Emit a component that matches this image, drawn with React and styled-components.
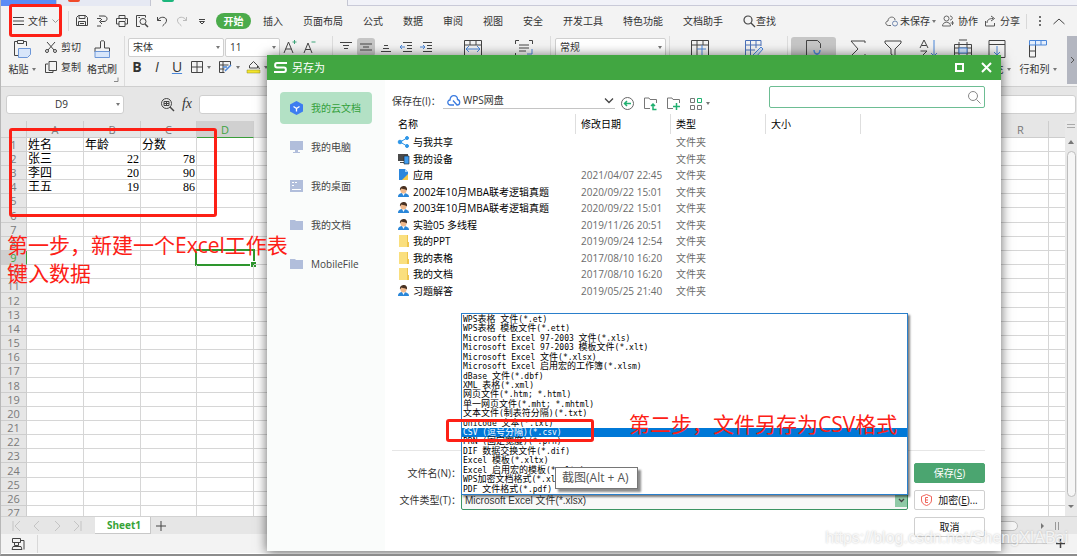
import React from 'react'
import styled, { createGlobalStyle, css } from 'styled-components'

const GlobalStyle = createGlobalStyle`
  * { box-sizing: border-box; }
  body {
    margin: 0;
    font-family: "Open Sans", "Noto Sans CJK SC", sans-serif;
    font-size: 10px;
    line-height: 14px;
    color: #333;
  }
  button, input, select {
    font: inherit;
    color: inherit;
    margin: 0;
    padding: 0;
    border: none;
    background: none;
    outline: none;
  }
  select { appearance: none; }
`;

const Page = styled.div`
  position: relative;
  display: flex;
  flex-direction: column;
  height: 100vh;
  overflow: hidden;
  background: #f3f3f3;
  border-left: 1px solid #b8b8b8;
  border-bottom: 2px solid #8c8c8c;
`;

const Svg = styled.svg`
  display: block;
  flex: none;
  overflow: visible;
  fill: none;
  stroke: ${p => p.$color || '#444'};
  stroke-width: ${p => p.$stroke || 1};
`;

const Icon = ({ w = 12, h = 12, color, stroke, children }) => (
  <Svg width={w} height={h} viewBox={`0 0 ${w} ${h}`} $color={color} $stroke={stroke} aria-hidden="true">
    {children}
  </Svg>
)

const Caret = styled.span`
  flex: none;
  border: 2px solid transparent;
  border-top: 3px solid #777;
  border-bottom: none;
`;

const Divider = styled.span`
  flex: none;
  width: 1px;
  height: ${p => p.$h || 16}px;
  background: #d8d8d8;
`;

/* window tabs */
const TabStrip = styled.div`
  display: flex;
  flex: none;
  height: 6px;
  background: #f1f2f8;
`;
const StripTab = styled.div`
  width: ${p => p.$w}px;
  padding-left: 11px;
  background: ${p => p.$bg};
  border-right: 1px solid #c4c6d2;
`;
const StripMark = styled.div`
  width: 12px;
  height: 2px;
  border-radius: 0 0 4px 4px;
  background: ${p => p.$bg};
`;
const StripRest = styled.div`
  flex: 1;
  border-bottom: 1px solid #c9cad8;
`;

/* menu bar */
const MenuBar = styled.div`
  display: flex;
  align-items: center;
  flex: none;
  height: 30px;
  padding: 0 12px 0 11px;
`;
const MenuButton = styled.button`
  display: flex;
  align-items: center;
  gap: ${p => p.$gap || 4}px;
  white-space: nowrap;
`;
const FileButton = styled(MenuButton)`
  width: 56px;
`;
const QuickTools = styled.div`
  display: flex;
  align-items: center;
  gap: 8px;
  padding: 0 8px 0 7px;
`;
const Tabs = styled.nav`
  display: flex;
  align-items: center;
  gap: 20px;
  flex: 1;
`;
const StartTab = styled.button`
  width: 35px;
  height: 16px;
  margin-right: -8px;
  border-radius: 8px;
  background: #4bab4b;
  color: #fff;
  font-weight: 700;
`;
const MenuRight = styled.div`
  display: flex;
  align-items: center;
  gap: 6px;
`;

/* ribbon */
const Ribbon = styled.div`
  display: flex;
  flex: none;
  height: 51px;
  border-bottom: 1px solid #cfcfcf;
`;
const Group = styled.div`
  display: flex;
  flex-direction: column;
  flex: none;
  width: ${p => p.$w}px;
  padding: 1px 0 0 ${p => p.$pl || 0}px;
  border-right: ${p => p.$line ? '1px solid #dcdcdc' : 'none'};
`;
const GroupRow = styled.div`
  display: flex;
  align-items: center;
  height: ${p => p.$h || 20}px;
  gap: ${p => p.$gap || 0}px;
`;
const BigTool = styled.button`
  display: flex;
  flex-direction: column;
  align-items: center;
  align-self: flex-start;
  flex: none;
  gap: 4px;
  width: ${p => p.$w || 36}px;
  height: 48px;
  padding-top: 3px;
  border-radius: 3px 3px 0 0;
  background: ${p => p.$on ? '#c6c6c6' : 'none'};
`;
const ToolLabel = styled.span`
  display: flex;
  align-items: center;
  gap: 3px;
  white-space: nowrap;
`;
const ToolButton = styled.button`
  display: flex;
  align-items: center;
  justify-content: center;
  flex: none;
  gap: 4px;
  min-width: ${p => p.$menu ? 26 : 18}px;
  height: 18px;
  white-space: nowrap;
  border-radius: 3px;
  background: ${p => p.$on ? '#c6c6c6' : 'none'};
`;
const Letter = styled.span`
  font-size: 14px;
  font-family: "Open Sans", sans-serif;
  font-weight: ${p => p.$bold ? 700 : 400};
  font-style: ${p => p.$italic ? 'italic' : 'normal'};
  text-decoration: ${p => p.$under ? 'underline #4a86d8' : 'none'};
`;
const PickerBox = styled.span`
  display: flex;
  align-items: center;
  width: ${p => p.$w}px;
  height: 19px;
  padding-right: 3px;
  background: #fff;
  border: 1px solid #cfcfcf;
  border-radius: 2px;

  select {
    flex: 1;
    min-width: 0;
    height: 17px;
    padding-left: 4px;
  }
`;
const RibbonMore = styled.button`
  flex: none;
  width: 10px;
  height: 48px;
  margin-left: auto;
  background: #b3b6c0;
`;

const Picker = ({ w, label, value }) => (
  <PickerBox $w={w}>
    <select aria-label={label}><option>{value}</option></select>
    <Caret />
  </PickerBox>
)

/* formula bar */
const FormulaBar = styled.div`
  display: flex;
  align-items: center;
  flex: none;
  height: 34px;
  padding: 0 1px 0 5px;
  background: #e6e6e6;
`;
const Field = styled.div`
  display: flex;
  align-items: center;
  width: ${p => p.$w ? p.$w + 'px' : 'auto'};
  flex: ${p => p.$w ? 'none' : 1};
  height: 19px;
  padding-right: 3px;
  background: #fff;
  border: 1px solid #cfcfcf;
  border-radius: 3px;

  input {
    flex: 1;
    min-width: 0;
    text-align: center;
  }
`;
const FormulaTools = styled.div`
  display: flex;
  align-items: center;
  justify-content: flex-end;
  gap: 8px;
  width: 75px;
  padding-right: 7px;
`;
const Fx = styled.span`
  font: italic 14px "Liberation Serif", serif;
`;

/* grid */
const SheetArea = styled.div`
  display: flex;
  flex: 1;
  min-height: 0;
  overflow: hidden;
`;
const GridClip = styled.div`
  flex: 1;
  min-width: 0;
  overflow: hidden;
  background: #fff;
`;
const Grid = styled.table`
  table-layout: fixed;
  width: 1105px;
  border-collapse: separate;
  border-spacing: 0;

  col { width: 57px; }
  col:nth-child(5n + 4) { width: 56px; }
  col:first-child { width: 26px; }

  thead th { height: 17px; }
  tbody tr { height: 14px; }
  tbody tr:nth-child(6n) { height: 15px; }
`;
const HeadCell = styled.th`
  padding: 0;
  border-right: 1px solid ${p => p.$on && p.$side ? '#3a9e3a' : '#cdcdcd'};
  border-bottom: 1px solid ${p => p.$on && !p.$side ? '#3a9e3a' : '#cdcdcd'};
  background: ${p => p.$on ? '#d0d0d0' : '#e6e6e6'};
  color: ${p => p.$on ? '#3fa33f' : '#7a7a7a'};
  font-size: 11px;
  font-weight: 400;
  line-height: 13px;
`;
const Cell = styled.td`
  position: relative;
  padding: 2px 1px 0;
  border-right: 1px solid #d6d6d6;
  border-bottom: 1px solid #d6d6d6;
  color: #000;
  font-family: "Liberation Serif", "Noto Sans CJK SC", serif;
  font-size: 12px;
  line-height: 11px;
  text-align: ${p => p.$num ? 'right' : 'left'};

  ${p => p.$active && css`
    &::before {
      content: '';
      position: absolute;
      inset: -2px;
      border: 2px solid #2e962e;
    }
    &::after {
      content: '';
      position: absolute;
      right: -3px;
      bottom: -3px;
      width: 5px;
      height: 5px;
      background: #2e962e;
      border: solid #fff;
      border-width: 1px 0 0 1px;
    }
  `}
`;
const ScrollColumn = styled.div`
  display: flex;
  flex-direction: column;
  align-items: center;
  flex: none;
  width: 12px;
  padding: 3px 0 6px;
  gap: 5px;
  background: #e9e9e9;
`;
const ScrollThumb = styled.div`
  flex: 1;
  width: 9px;
  border: 1px solid #bdbdbd;
  border-radius: 5px;
  background: #f6f6f6;
`;

const SheetBar = styled.div`
  display: flex;
  align-items: center;
  flex: none;
  height: 18px;
  padding: 0 18px 0 10px;
  background: #e6e6e6;
  border-top: 1px solid #d2d2d2;
`;
const SheetNav = styled.div`
  display: flex;
  gap: 8px;
  width: 84px;
`;
const SheetTab = styled.button`
  width: 56px;
  height: 17px;
  padding-left: 3px;
  background: #fff;
  border-bottom: 1px solid #c8c8c8;
  border-right: 1px solid #c8c8c8;
  color: #36a336;
  font-weight: 700;
`;
const AddSheet = styled.button`
  margin-left: 4px;
`;
const HScroll = styled.div`
  display: flex;
  align-items: center;
  justify-content: flex-end;
  gap: 10px;
  flex: 1;
`;
const HThumb = styled.div`
  width: 60px;
  height: 10px;
  margin-right: 13px;
  border: 1px solid #bdbdbd;
  border-radius: 5px;
  background: #f6f6f6;
`;
const StatusBar = styled.div`
  display: flex;
  align-items: center;
  justify-content: space-between;
  flex: none;
  height: 20px;
  padding: 0 11px;
  border-bottom: 1px solid #fff;
`;
const StatusLeft = styled.div`
  display: flex;
  align-items: center;
  gap: 12px;
`;
const ZoomTrack = styled.div`
  display: flex;
  align-items: center;
  gap: 8px;

  &::before {
    content: '';
    width: 60px;
    height: 1px;
    background: #cfcfcf;
  }
`;

/* save dialog */
const Dialog = styled.section`
  position: absolute;
  left: 266px;
  right: 76px;
  top: 55px;
  bottom: 3px;
  display: flex;
  flex-direction: column;
  background: #fff;
  box-shadow: 0 1px 11px rgba(0, 0, 0, 0.6);
`;
const TitleBar = styled.header`
  display: flex;
  align-items: center;
  flex: none;
  gap: 5px;
  height: 25px;
  padding: 0 10px 0 7px;
  background: #41a641;
  color: #fff;
  font-size: 11px;
`;
const WindowButtons = styled.div`
  display: flex;
  align-items: center;
  gap: 18px;
  margin-left: auto;
`;
const DialogBody = styled.div`
  display: flex;
  flex: 1;
  min-height: 0;
`;
const Places = styled.nav`
  display: flex;
  flex-direction: column;
  flex: none;
  gap: 7px;
  width: 118px;
  padding: 12px 13px;
  background: #fafcfb;
`;
const Place = styled.button`
  display: flex;
  align-items: center;
  gap: 8px;
  height: 32px;
  padding: 0 0 1px 10px;
  border-radius: 4px;
  background: ${p => p.$on ? '#b3e1c5' : 'none'};
  color: ${p => p.$on ? '#33a03c' : '#444'};
`;
const Content = styled.div`
  display: flex;
  flex-direction: column;
  flex: 1;
  min-width: 0;
  padding: 7px 16px 14px 7px;
`;
const PathRow = styled.div`
  display: flex;
  align-items: center;
  height: 27px;
`;
const PathPicker = styled.div`
  display: flex;
  align-items: center;
  gap: 3px;
  width: 172px;
  height: 16px;
  padding: 0 2px 0 4px;
  border-bottom: 1px solid #c4c4c4;

  select { flex: 1; }
`;
const PathLabel = styled.label`
  width: 51px;
  white-space: nowrap;
`;
const PathTools = styled.div`
  display: flex;
  align-items: center;
  flex: 1;
  gap: 10px;
  padding: 6px 0 0 6px;
`;
const SearchBox = styled.label`
  display: flex;
  align-items: center;
  width: 216px;
  height: 22px;
  margin-top: -7px;
  padding: 0 4px;
  border: 1px solid #6dbd93;
  border-radius: 2px;

  input { flex: 1; min-width: 0; }
`;
const FileTable = styled.table`
  table-layout: fixed;
  width: 463px;
  margin-left: 6px;
  border-collapse: separate;
  border-spacing: 0;
  color: #000;

  col:first-child { width: 178px; }

  th {
    height: 20px;
    padding: 0 0 0 5px;
    border-right: 1px solid #dedede;
    font-weight: 400;
    text-align: left;
  }
  th:first-child { padding-left: 0; }

  td {
    height: 16px;
    padding: 0 0 0 5px;
    color: #6b6b6b;
    white-space: nowrap;
  }
  td:first-child {
    padding: 0;
    color: #000;
  }
  tbody tr:nth-child(even) td { height: 17px; }
`;
const FileName = styled.span`
  display: flex;
  align-items: center;
  gap: 3px;
`;
const SaveForm = styled.form`
  display: grid;
  grid-template-columns: 69px 1fr 77px;
  row-gap: 7px;
  align-items: center;
  margin-top: auto;
  padding-top: 12px;
  border-top: 1px solid #e6e6e6;
`;
const FormLabel = styled.label`
  text-align: right;
  white-space: nowrap;
`;
const NameInput = styled.input`
  height: 20px;
  border: 1px solid #6dbd93;
`;
const TypeField = styled.div`
  position: relative;
  display: flex;
  align-items: center;
  height: 20px;
  background: #f8f8f8;
  border: 1px solid #3d9463;
  border-radius: 2px;

  select {
    flex: 1;
    height: 18px;
    padding: 1px 0 0 3px;
    font-family: "Liberation Sans", "Noto Sans CJK SC", sans-serif;
  }
`;
const DropMark = styled.span`
  display: flex;
  align-items: center;
  justify-content: center;
  width: 12px;
  height: 14px;
  background: #8fcaa6;
`;
const TypeList = styled.ul`
  position: absolute;
  left: -1px;
  right: -1px;
  bottom: 14px;
  display: flex;
  flex-direction: column;
  height: 182px;
  margin: 0;
  padding: 1px 0 0;
  list-style: none;
  background: #fff;
  border: 1px solid #2a7fcb;
  box-shadow: 2px 2px 2px rgba(0, 0, 0, 0.5);
`;
const TypeOption = styled.li`
  flex: 1;
  min-height: 0;
  padding-left: 1px;
  white-space: nowrap;
  background: ${p => p.$on ? '#0078d7' : 'none'};
  color: ${p => p.$on ? '#fff' : '#000'};
  font-family: "DejaVu Sans Mono", "Noto Sans CJK SC", monospace;
  font-size: 8px;
  line-height: 10px;
`;
const Han = styled.span`
  font-size: 9px;
  line-height: 9px;
`;
const FormButton = styled.button`
  display: flex;
  align-items: center;
  justify-content: center;
  gap: 6px;
  height: 20px;
  margin-left: 6px;
  border: 1px solid ${p => p.$primary ? '#4ba570' : '#cfcfcf'};
  border-radius: 2px;
  background: ${p => p.$primary ? '#4ba570' : '#fff'};
  color: ${p => p.$primary ? '#fff' : '#111'};
`;
const CancelButton = styled(FormButton)`
  grid-column: 3;
`;

/* notes drawn above everything */
const Frame = styled.div`
  position: absolute;
  left: ${p => p.$x}px;
  top: ${p => p.$y}px;
  width: ${p => p.$w}px;
  height: ${p => p.$h}px;
  border: 3px solid #fd2016;
  border-radius: 3px;
`;
const Note = styled.p`
  position: absolute;
  left: ${p => p.$x}px;
  top: ${p => p.$y}px;
  margin: 0;
  color: #fd2016;
  font-size: 21px;
  line-height: 28px;
  white-space: nowrap;
`;
const Hint = styled.div`
  position: absolute;
  left: 554px;
  top: 467px;
  padding: 1px 8px 1px 6px;
  border: 1px solid #767676;
  background: #fff;
  box-shadow: 3px 3px 2px rgba(0, 0, 0, 0.45);
  color: #555;
  font-size: 12px;
  line-height: 18px;
`;
const Watermark = styled.div`
  position: absolute;
  right: 9px;
  bottom: 6px;
  color: rgba(255, 255, 255, 0.8);
  font: 16px/20px "Liberation Sans", sans-serif;
  text-shadow: 0 0 2px rgba(0, 0, 0, 0.25);
`;

const columns = 'ABCDEFGHIJKLMNOPQRS'.split('')
const rows = Array.from({ length: 27 }, (_, i) => i + 1)
const data = {
  1: ['姓名', '年龄', '分数'],
  2: ['张三', 22, 78],
  3: ['李四', 20, 90],
  4: ['王五', 19, 86],
}

const files = [
  ['share', '与我共享', ''],
  ['device', '我的设备', ''],
  ['app', '应用', '2021/04/07 22:45'],
  ['person', '2002年10月MBA联考逻辑真题', '2020/09/22 15:01'],
  ['person', '2003年10月MBA联考逻辑真题', '2020/09/22 15:01'],
  ['person', '实验05 多线程', '2019/11/26 20:51'],
  ['folder', '我的PPT', '2019/09/24 12:54'],
  ['folder', '我的表格', '2017/08/10 16:20'],
  ['folder', '我的文档', '2017/08/10 16:20'],
  ['person', '习题解答', '2019/05/25 21:40'],
]

const types = [
  'WPS表格 文件(*.et)',
  'WPS表格 模板文件(*.ett)',
  'Microsoft Excel 97-2003 文件(*.xls)',
  'Microsoft Excel 97-2003 模板文件(*.xlt)',
  'Microsoft Excel 文件(*.xlsx)',
  'Microsoft Excel 启用宏的工作簿(*.xlsm)',
  'dBase 文件(*.dbf)',
  'XML 表格(*.xml)',
  '网页文件(*.htm; *.html)',
  '单一网页文件(*.mht; *.mhtml)',
  '文本文件(制表符分隔)(*.txt)',
  'Unicode 文本(*.txt)',
  'CSV (逗号分隔)(*.csv)',
  'PRN (固定宽度)(*.prn)',
  'DIF 数据交换文件(*.dif)',
  'Excel 模板(*.xltx)',
  'Excel 启用宏的模板(*.xltm)',
  'WPS加密文档格式(*.xls)',
  'PDF 文件格式(*.pdf)',
]

const fileIcons = {
  share: (
    <g fill="#2e96e8" stroke="#2e96e8">
      <path d="M9 2 2 6l7 4" fill="none" />
      <circle cx="9" cy="2" r="1.5" /><circle cx="2" cy="6" r="1.8" /><circle cx="9" cy="10" r="1.5" />
    </g>
  ),
  device: (
    <g stroke="none">
      <path fill="#4a4a4a" d="M0 1h10v7H0zM2 9h5v1H2z" />
      <path fill="#3f9cf0" stroke="#222" strokeWidth=".6" d="M6 3h5v8H6z" />
    </g>
  ),
  app: (
    <g stroke="none">
      <path fill="#2b86dc" d="M1 0h6l3 3v8H1z" />
      <path fill="#f7c948" d="M4 11 10 5v6z" />
      <path fill="#9fd0fa" d="M7 0v3h3z" />
    </g>
  ),
  person: (
    <g stroke="none">
      <path fill="#2a86d8" d="M0 11c0-3 2-4 5-4s6 1 6 4z" />
      <path fill="#fff" d="M4 7h3l-1.500 3z" />
      <circle cx="5.500" cy="4.500" r="3" fill="#f0b98c" />
      <path fill="#4a3222" d="M2 4.500C1.500 1 4 0 6 0s3.500 1.500 3 4.500C8 3 5 3.500 3.500 2.500z" />
    </g>
  ),
  folder: (
    <g stroke="none">
      <path fill="#fadf7e" d="M1 0h9v12H1z" />
      <path fill="#eec54e" d="M9 0h1v7h1v5H9z" />
    </g>
  ),
}

const folderShape = <path fill="#b1bedb" stroke="none" d="M0 1h5l1 1h7v9H0z" />
const places = [
  ['我的云文档', <g stroke="none"><path fill="#3d7df0" d="M6.500-1 13 2.500v7L6.500 13 0 9.500v-7z" /><path d="m3.500 4.500 3 2 3-2M6.500 6.500v3" stroke="#fff" strokeWidth="1.300" /></g>],
  ['我的电脑', <path fill="#b1bedb" stroke="none" d="M0 0h13v9H8v2h2v1H3v-1h2V9H0z" />],
  ['我的桌面', <g stroke="none"><path fill="#b1bedb" d="M0 0h13v12H0z" /><path fill="#fff" d="M2 2h2v1H2zM5 2h2v1H5zM2 5h2v1H2zM2 9h9v1H2z" /></g>],
  ['我的文档', folderShape],
  ['MobileFile', folderShape],
]

// wide glyphs get a slightly larger face so the list keeps its half/full width rhythm
const MixedText = ({ text }) =>
  text.split(/([\u4e00-\u9fff]+)/).map((part, i) => (i % 2 ? <Han key={i}>{part}</Han> : part))

const TopMenu = () => (
  <MenuBar>
    <FileButton>
      <Icon w={12} h={10}><path d="M1 1.500h11M1 5h11M1 8.500h11" /></Icon>
      文件
      <Icon w={7} h={4} color="#999"><path d="m.5.5 3 3 3-3" /></Icon>
    </FileButton>
    <Divider $h={20} />
    <QuickTools>
      <Icon><path d="M.5 2.500l2-2h7l2 2v8h-11zM3 .5v3h6v-3M2.500 10.500v-4h7v4M4 8.500h4" /></Icon>
      <Icon><path d="M3 1h5c4 0 4 5.500 0 5.500H4.500M6 4 3.500 6.500 6 9M1 3.500h4M1 11h4" /></Icon>
      <Icon><path d="M3 3.500v-3h6v3M3 9H.5V3.500h11V9H9M3 6.500h6v5H3zM9 5h1" /></Icon>
      <Icon><path d="M4 11.500H.5V.5h9v2M4 2.500H2.500" /><circle cx="7" cy="6.500" r="3" /><path d="m9 9 3 3" strokeWidth="1.500" /></Icon>
      <Icon><path d="M1.500 2v3.500H5M1.500 5.500C4 1 10 1.500 10.500 5c.3 2.500-2 4-4 6" /></Icon>
      <Icon color="#bbb"><path d="M10.500 2v3.500H7M10.500 5.500C8 1 2 1.500 1.500 5c-.3 2.500 2 4 4 6" /></Icon>
      <Icon><path d="M3 4.500h6M3.500 6.500h5L6 9z" /></Icon>
    </QuickTools>
    <Tabs>
      <StartTab>开始</StartTab>
      {['插入', '页面布局', '公式', '数据', '审阅', '视图', '安全', '开发工具', '特色功能', '文档助手'].map(t => (
        <MenuButton key={t}>{t}</MenuButton>
      ))}
      <MenuButton $gap={1}>
        <Icon stroke={1.2}><circle cx="5" cy="5" r="4" /><path d="m8 8 4 4" /></Icon>
        查找
      </MenuButton>
    </Tabs>
    <MenuRight>
      <MenuButton $gap={2}>
        <Icon w={13} color="#666"><path d="M6 10.500H3.500C0 10.500 0 6 3 6c0-5 7-5 7-1" /><circle cx="10" cy="8.500" r="2.500" stroke="#7088b0" /></Icon>
        未保存
        <Caret />
      </MenuButton>
      <MenuButton>
        <Icon color="#666"><circle cx="4.500" cy="3.500" r="2.500" /><path d="M.5 11c0-5 8-5 8 0zM8 1c3 0 3 4 0 4M10.500 6v4M8.500 8h3.500" /></Icon>
        协作
      </MenuButton>
      <MenuButton>
        <Icon color="#555"><path d="M1.500 6v5h9V8M3 8c0-3 2-4.500 6-4.500M7 1l3.500 2.500L7 6" /></Icon>
        分享
      </MenuButton>
      <Divider $h={15} />
      <Icon w={14}><path d="M7 1v2M7 5v2M7 9v2" strokeWidth="1.500" /></Icon>
      <Icon w={12} h={7}><path d="m.5 6 5.500-5 5.500 5" /></Icon>
    </MenuRight>
  </MenuBar>
)

const Toolbar = () => (
  <Ribbon>
    <Group $w={40} $pl={3}>
      <BigTool>
        <Icon w={18} h={18}><path d="M5 15.500H1.500v-14h3M10.500 1.500h3V6M4.500.5h6v3h-6z" /><path d="M5.500 8.500v9h9l3-3v-6z" fill="#d8e6fa" stroke="#6d97d8" /></Icon>
        <ToolLabel>粘贴<Caret /></ToolLabel>
      </BigTool>
    </Group>
    <Group $w={44} $pl={4}>
      <GroupRow>
        <ToolButton>
          <Icon><path d="M2 1l7 8M10 1 3 9" /><circle cx="2" cy="10" r="1.500" /><circle cx="10" cy="10" r="1.500" /></Icon>
          剪切
        </ToolButton>
      </GroupRow>
      <GroupRow>
        <ToolButton>
          <Icon><path d="M4 .5h7.500v9H4zM3 3H.5v8.500H8V10" /></Icon>
          复制
        </ToolButton>
      </GroupRow>
    </Group>
    <Group $w={40} $line>
      <BigTool $w={34}>
        <Icon w={17} h={18}><path d="M6.500 8V1.500c0-1 4-1 4 0V8h5v4H1V8z" /><path d="M1 11.500h14.500v6H1z" fill="#d8e6fa" stroke="#6d97d8" /><path d="M24 37.500v4h-4" stroke="#888" /></Icon>
        <ToolLabel>格式刷</ToolLabel>
      </BigTool>
    </Group>
    <Group $w={208} $pl={3} $line>
      <GroupRow $gap={1}>
        <Picker w={96} label="字体" value="宋体" />
        <Picker w={55} label="字号" value="11" />
        <ToolButton><Icon w={14} h={14}><path d="m1 13 4.500-11L10 13M2.500 9h6" /><path d="M11.500 0v4M9.500 2h4" stroke="#3ea57a" /></Icon></ToolButton>
        <ToolButton><Icon w={14} h={14}><path d="m2 13 4-10 4 10M3.500 9.500h5" /><path d="M9.500 2h4" stroke="#3ea57a" /></Icon></ToolButton>
      </GroupRow>
      <GroupRow $gap={2}>
        <ToolButton><Letter $bold>B</Letter></ToolButton>
        <ToolButton><Letter $italic>I</Letter></ToolButton>
        <ToolButton><Letter $under>U</Letter></ToolButton>
        <ToolButton $menu>
          <Icon><path d="M.5.5h11v11H.5zM6 .5v11M.5 6h11" /></Icon>
          <Caret />
        </ToolButton>
        <ToolButton $menu>
          <Icon w={13}><path d="M11.500 5V.5H.5v11h5M.5 4h9M.5 8h5M4 .5v11" /><path d="m6 10 6-6M4 6h4" stroke="#4a86d8" strokeWidth="1.500" /></Icon>
          <Caret />
        </ToolButton>
        <ToolButton $menu>
          <Icon w={13}><path d="M2.500 7V4.500l4-4 4 4V7zM11 5l1.500 3" /><path d="M0 9h13v3H0z" fill="#f5e62b" stroke="#8a8a2a" strokeWidth=".5" /></Icon>
          <Caret />
        </ToolButton>
      </GroupRow>
    </Group>
    <Group $w={218} $pl={4} $line>
      <GroupRow $gap={2}>
        <ToolButton><Icon h={10}><path d="M0 .5h12M3 3.500h6M4 6.500h4" /></Icon></ToolButton>
        <ToolButton $on><Icon h={10}><path d="M0 2h12M3 5h6M0 8h12" /></Icon></ToolButton>
        <ToolButton><Icon h={10}><path d="M4 3.500h4M3 6.500h6M1 9.500h10" /></Icon></ToolButton>
        <ToolButton><Icon h={10}><path d="M3 .5h9M7 3.500h5M7 6.500h5M3 9.500h9" /><path d="M5 5H0m2-2L0 5l2 2" stroke="#4a86d8" /></Icon></ToolButton>
        <ToolButton><Icon h={10}><path d="M3 .5h9M7 3.500h5M7 6.500h5M3 9.500h9" /><path d="M0 5h5M3 3l2 2-2 2" stroke="#4a86d8" /></Icon></ToolButton>
        <BigTool $w={72}>
          <Icon w={18} h={18}><path d="M.5.5h17v17H.5zM.5 5h17M6 .5V5M12 .5V5" /><path d="M2 9h14M5 6 2 9l3 3M13 6l3 3-3 3" stroke="#4a86d8" /></Icon>
        </BigTool>
        <BigTool $w={26}>
          <Icon w={18} h={18}><path d="M.5 4V.5H4M14 .5h3.500V4M4 5h10M4 8h10M4 11h7M.5 13v4" /><path d="M17 9v5h-5" stroke="#4a86d8" /></Icon>
        </BigTool>
      </GroupRow>
    </Group>
    <Group $w={119} $pl={4} $line>
      <GroupRow><Picker w={111} label="数字格式" value="常规" /></GroupRow>
    </Group>
    <Group $w={118} $pl={3} $line>
      <GroupRow $h={49}>
        <BigTool $w={54}>
          <Icon w={18} h={18}><path d="M.5.5h17v17H.5zM.5 5h17M6 .5v17M12 .5V5" /><path d="M6 9h9M11 5v10" stroke="#4a86d8" /></Icon>
        </BigTool>
        <BigTool $w={54}>
          <Icon w={18} h={18}><path d="M16 6V.5H.5v15h7M.5 5H16M.5 10H10M5.500.5v15M11 .5V8" stroke="#4a70b8" /><path d="m8 15 8-8 2 2-7 8z" fill="#d8e6fa" stroke="#4a86d8" /></Icon>
        </BigTool>
      </GroupRow>
    </Group>
    <Group $w={48} $pl={3}>
      <BigTool $w={45} $on>
        <Icon w={18} h={18}><path d="M7 17.500H1.500V.5h11l3 3V8" /><path d="M9 10c0 3 2 4 3 4v4M15 10c0 3-2 4-3 4" stroke="#4a86d8" strokeWidth="1.500" /></Icon>
      </BigTool>
    </Group>
    <Group $w={230} $pl={4}>
      <GroupRow $h={49}>
        <BigTool $w={35}><Icon w={18} h={18}><path d="M16 3V1H2l7 8-7 7h14v-2" /></Icon></BigTool>
        <BigTool $w={35}><Icon w={18} h={18}><path d="M1 1h16v2l-6 6v8l-4-3V9L1 3z" /></Icon></BigTool>
        <BigTool $w={35}><Icon w={18} h={18}><path d="m1 8 4-8 4 8M2.500 5.500h5M1.500 11H8l-6 6h7" /><path d="M15 0v16m-3-3 3 3 3-3" stroke="#4a86d8" /></Icon></BigTool>
        <BigTool $w={35}><Icon w={18} h={18}><path d="M.5 4.500h17v12H.5zM.5 8h17M.5 13h17M5 2v15M13 2v15M5 0h8" /><path d="M5 8h8v5H5z" fill="#cfe0fa" stroke="#4a86d8" /></Icon></BigTool>
        <BigTool $w={34}>
          <Icon w={18} h={18}><path d="M1 .5h16v17H1zM1 4.500h16" /><path d="M9 6v9m-3-3 3 3 3-3" stroke="#4a86d8" /></Icon>
          <ToolLabel>填充<Caret /></ToolLabel>
        </BigTool>
        <BigTool $w={48}>
          <Icon w={18} h={18}><path d="M.5 5v12h6V5M.5 11h6" /><path d="M.5.5h17V5H.5zM6.500.5V5M12 .5V5" stroke="#4a86d8" fill="#e4eefc" /></Icon>
          <ToolLabel>行和列<Caret /></ToolLabel>
        </BigTool>
      </GroupRow>
    </Group>
    <RibbonMore aria-label="更多">
      <Icon w={10} h={8} color="#555"><path d="m4 1 3 3-3 3" /></Icon>
    </RibbonMore>
  </Ribbon>
)

const Sheet = () => (
  <SheetArea>
    <GridClip>
      <Grid>
        <colgroup>
          <col />
          {columns.map(c => <col key={c} />)}
        </colgroup>
        <thead>
          <tr>
            <HeadCell />
            {columns.map(c => <HeadCell key={c} $on={c === 'D'}>{c === 'S' ? '' : c}</HeadCell>)}
          </tr>
        </thead>
        <tbody>
          {rows.map(r => (
            <tr key={r}>
              <HeadCell $side $on={r === 9}>{r}</HeadCell>
              {columns.map((c, i) => {
                const value = data[r] && data[r][i]
                return <Cell key={c} $num={typeof value === 'number'} $active={r === 9 && c === 'D'}>{value}</Cell>
              })}
            </tr>
          ))}
        </tbody>
      </Grid>
    </GridClip>
    <ScrollColumn>
      <Icon w={8} h={5} color="#aaa"><path d="M0 .5h8M0 3.500h8" /></Icon>
      <Icon w={6} h={12} color="none"><path d="m0 10 3-4 3 4z" fill="#777" /></Icon>
      <ScrollThumb />
      <Icon w={6} h={8} color="none"><path d="m0 3 3 3 3-3z" fill="#777" /></Icon>
    </ScrollColumn>
  </SheetArea>
)

const SaveDialog = () => (
  <Dialog role="dialog" aria-label="另存为">
    <TitleBar>
      <Icon w={13} h={11} color="#fff" stroke={2}><path d="M13 1H3C.5 1 .5 5.500 3 5.500h7c2.500 0 2.500 4.500 0 4.500H0" /></Icon>
      另存为
      <WindowButtons>
        <button aria-label="最大化"><Icon w={9} h={9} color="#fff" stroke={2}><path d="M1 1h7v7H1z" /></Icon></button>
        <button aria-label="关闭"><Icon w={9} h={9} color="#fff" stroke={2}><path d="m0 0 9 9M9 0 0 9" /></Icon></button>
      </WindowButtons>
    </TitleBar>
    <DialogBody>
      <Places>
        {places.map(([name, shape], i) => (
          <Place key={name} $on={i === 0}>
            <Icon w={13}>{shape}</Icon>
            {name}
          </Place>
        ))}
      </Places>
      <Content>
        <PathRow>
          <PathLabel htmlFor="path">保存在(I)：</PathLabel>
          <PathPicker>
            <Icon w={13} h={11} color="#3a7be0" stroke={1.3}><path d="M3.500 10C0 10 0 5 3 5c0-6 7.500-5.500 7.500-.5C13.500 5 13.500 10 10 10L6 5.500M3.500 10H7" /></Icon>
            <select id="path"><option>WPS网盘</option></select>
            <Icon w={8} h={5} stroke={1.3}><path d="m0 .5 4 4 4-4" /></Icon>
          </PathPicker>
          <PathTools>
            <Icon w={13} h={13} color="#666"><circle cx="6.500" cy="6.500" r="6" /><path d="M10 6.500H3.500M6 4 3.500 6.500 6 9" stroke="#20b070" strokeWidth="1.500" /></Icon>
            <Icon w={13} h={13} color="#777"><path d="M6 11.500H.5V1H5l1 1.500h6.500V6" /><path d="M12.500 12.500H9V7M7 9l2-2 2 2" stroke="#20b070" strokeWidth="1.500" /></Icon>
            <Icon w={13} h={13} color="#777"><path d="M6 11.500H.5V1H5l1 1.500h6.500V6" /><path d="M9.500 6v7M6 9.500h7" stroke="#20b070" strokeWidth="1.500" /></Icon>
            <MenuButton>
              <Icon w={12} color="#777"><path d="M.5.5h4v4h-4zM.5 7.500h4v4h-4zM7.500 7.500h4v4h-4z" /><path d="M7.500.5h4v4h-4z" stroke="#20b070" /></Icon>
              <Caret />
            </MenuButton>
          </PathTools>
          <SearchBox>
            <input aria-label="搜索" />
            <Icon color="#888" w={12}><circle cx="5" cy="5" r="4.500" /><path d="m8.500 8.500 4 4" /></Icon>
          </SearchBox>
        </PathRow>
        <FileTable>
          <colgroup><col /><col /><col /><col /></colgroup>
          <thead>
            <tr><th>名称</th><th>修改日期</th><th>类型</th><th>大小</th></tr>
          </thead>
          <tbody>
            {files.map(([kind, name, date]) => (
              <tr key={name}>
                <td><FileName><Icon>{fileIcons[kind]}</Icon>{name}</FileName></td>
                <td>{date}</td>
                <td>文件夹</td>
                <td />
              </tr>
            ))}
          </tbody>
        </FileTable>
        <SaveForm onSubmit={e => e.preventDefault()}>
          <FormLabel htmlFor="name">文件名(N)：</FormLabel>
          <NameInput id="name" />
          <FormButton $primary><span>保存(<u>S</u>)</span></FormButton>
          <FormLabel htmlFor="type">文件类型(T)：</FormLabel>
          <TypeField>
            <select id="type"><option>Microsoft Excel 文件(*.xlsx)</option></select>
            <DropMark><Icon w={5} h={3} stroke={1.3}><path d="m0 0 2.500 2.500L5 0" /></Icon></DropMark>
            <TypeList role="listbox" aria-label="文件类型">
              {types.map(t => (
                <TypeOption key={t} role="option" $on={t.startsWith('CSV')} aria-selected={t.startsWith('CSV')}>
                  <MixedText text={t} />
                </TypeOption>
              ))}
            </TypeList>
          </TypeField>
          <FormButton type="button">
            <Icon w={11} color="#f0635a"><path d="m5.500.5 5 2V6c0 3-2 4.500-5 5.500C2.500 10.500.5 9 .5 6V2.500zM7 3.500H4.500v5H7M4.500 6H7" /></Icon>
            <span>加密(<u>E</u>)...</span>
          </FormButton>
          <CancelButton type="button">取消</CancelButton>
        </SaveForm>
      </Content>
    </DialogBody>
  </Dialog>
)

const App = () => {
  return (
    <>
      <GlobalStyle />
      <Page>
        <TabStrip>
          <StripTab $w={56} $bg="#5b8cf5" />
          <StripTab $w={94} $bg="#e6e9f3"><StripMark $bg="#f04a2a" /></StripTab>
          <StripTab $w={197} $bg="#f3f3f3"><StripMark $bg="#1cb67c" /></StripTab>
          <StripRest />
        </TabStrip>
        <TopMenu />
        <Toolbar />
        <FormulaBar>
          <Field $w={118}>
            <input aria-label="名称框" defaultValue="D9" />
            <Caret />
          </Field>
          <FormulaTools>
            <Icon w={13}><circle cx="5.500" cy="5.500" r="5" /><path d="m9 9 4 4" strokeWidth="1.500" /><path d="M3 3.500h5v4H3zM5.500 3.500v4M3 5.500h5" /></Icon>
            <Fx>fx</Fx>
          </FormulaTools>
          <Field><input aria-label="编辑栏" /></Field>
        </FormulaBar>
        <Sheet />
        <SheetBar>
          <SheetNav>
            <Icon color="#c4c4c4"><path d="M2 1v10M9 1 4 6l5 5" /></Icon>
            <Icon color="#c4c4c4"><path d="M8 1 3 6l5 5" /></Icon>
            <Icon color="#c4c4c4"><path d="m4 1 5 5-5 5" /></Icon>
            <Icon color="#c4c4c4"><path d="m3 1 5 5-5 5M10 1v10" /></Icon>
          </SheetNav>
          <SheetTab>Sheet1</SheetTab>
          <AddSheet aria-label="新建工作表"><Icon><path d="M6 1v10M1 6h10" /></Icon></AddSheet>
          <HScroll>
            <HThumb />
            <Icon w={4} h={6} color="none"><path d="m0 0 3 3-3 3z" fill="#777" /></Icon>
            <Icon w={4} h={8} color="#999"><path d="M.5 0v8M3.500 0v8" /></Icon>
          </HScroll>
        </SheetBar>
        <StatusBar>
          <StatusLeft>
            <Icon w={13}><path d="M.5.5h8v4h-8zM2.500 4.500v3h4v-3M9 2.500h3v9M1 8.500h8l1 3H0z" /></Icon>
            <Divider $h={18} />
          </StatusLeft>
          <ZoomTrack><Icon w={11} h={11} stroke={1.5}><path d="M5.500 1v9M1 5.500h9" /></Icon></ZoomTrack>
        </StatusBar>
        <SaveDialog />
        <Hint role="tooltip">截图(Alt + A)</Hint>
        <Frame $x={8} $y={4} $w={53} $h={33} />
        <Frame $x={8} $y={128} $w={208} $h={89} />
        <Frame $x={445} $y={419} $w={148} $h={23} />
        <Note $x={6} $y={231}>第一步，新建一个Excel工作表<br />键入数据</Note>
        <Note $x={628} $y={410}>第二步，文件另存为CSV格式</Note>
        <Watermark>https://blog.csdn.net/ShengXIABai</Watermark>
      </Page>
    </>
  )
}

export default App
